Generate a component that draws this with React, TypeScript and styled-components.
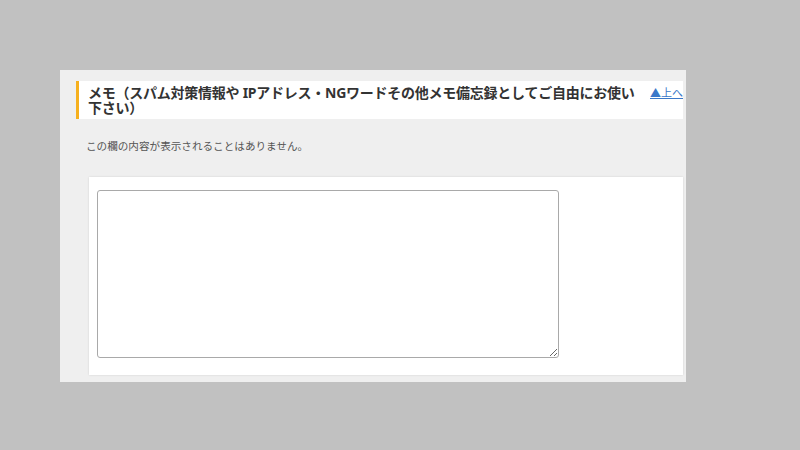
import React from "react";
import styled, { createGlobalStyle } from "styled-components";

const GlobalStyle = createGlobalStyle`
  html, body {
    margin: 0;
    padding: 0;
    background: #c1c1c1;
    font-family: "Noto Sans", "Noto Sans CJK JP", sans-serif;
  }
`;

const Page = styled.div`
  width: 800px;
  height: 450px;
  box-sizing: border-box;
  padding: 70px 0 0 60px;
`;

const Panel = styled.section`
  width: 626px;
  height: 312px;
  box-sizing: border-box;
  padding: 11px 3px 7px 16px;
  background: #efefef;
  display: flex;
  flex-direction: column;
`;

const Header = styled.div`
  display: flex;
  align-items: flex-start;
  gap: 3px;
  background: #fff;
  border-left: 3px solid #f6b01e;
  padding: 4px 0 4px 9px;
`;

const Title = styled.h3`
  flex: 1;
  margin: 0;
  font-family: "Noto Sans", "Noto Sans CJK JP", sans-serif;
  font-size: 14px;
  line-height: 15px;
  letter-spacing: -0.25px;
  font-weight: 700;
  color: #333;
`;

const TopLink = styled.a`
  flex-shrink: 0;
  font-size: 11px;
  line-height: 12px;
  color: #3b78c9;
  text-decoration: underline;
  margin-top: 2px;
`;

const Note = styled.p`
  margin: 19px 0 0 10px;
  font-family: "Noto Sans CJK JP", sans-serif;
  font-size: 10.6px;
  line-height: 16px;
  color: #555;
`;

const Card = styled.div`
  margin: 23px 0 0 13px;
  flex: 1;
  background: #fff;
  box-shadow: 0 0 2px rgba(0, 0, 0, 0.12);
  padding: 13px 8px;
`;

const MemoArea = styled.textarea`
  display: block;
  width: 462px;
  height: 168px;
  box-sizing: border-box;
  margin: 0;
  border: 1px solid #a9a9a9;
  border-radius: 3px;
  background: #fff;
`;

export default function App() {
  return (
    <>
      <GlobalStyle />
      <Page>
        <Panel>
          <Header>
            <Title>
              メモ（スパム対策情報や IPアドレス・NGワードその他メモ備忘録としてご自由にお使い下さい）
            </Title>
            <TopLink href="#">▲上へ</TopLink>
          </Header>
          <Note>この欄の内容が表示されることはありません。</Note>
          <Card>
            <MemoArea />
          </Card>
        </Panel>
      </Page>
    </>
  );
}
